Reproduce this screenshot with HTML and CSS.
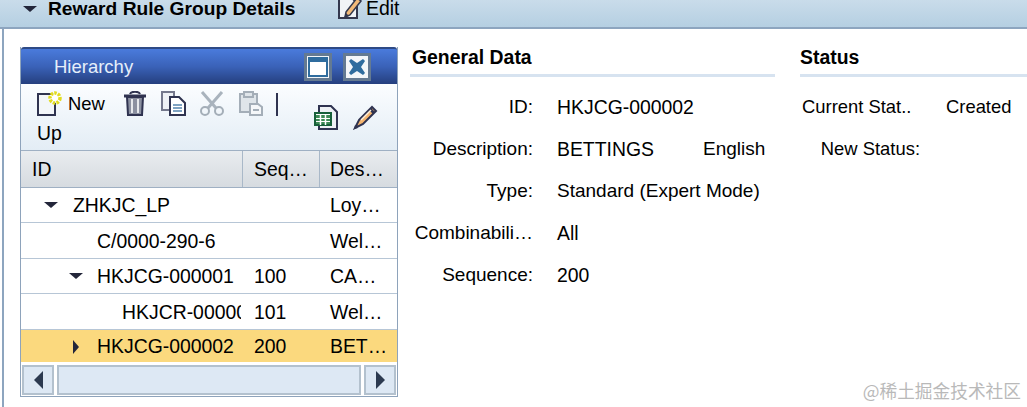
FILE: index.html
```html
<!DOCTYPE html>
<html lang="en">
<head>
  <meta charset="UTF-8">
  <title>Reward Rule Group Details</title>
  <link rel="stylesheet" href="styles.css">
</head>
<body>
  <div class="topbar">
    <span class="tri-down top-tri"></span>
    <span class="page-title">Reward Rule Group Details</span>
    <span class="edit-btn">
      <svg width="24" height="21" viewBox="0 0 24 21">
        <path d="M1 1h14l4 4v15H1z" fill="#f1f3f6" stroke="#34384e" stroke-width="2"/>
        <path d="M8 14L19 0l4 3-11 14-5 2z" fill="#f2b978" stroke="#33384d" stroke-width="1.500"/>
        <path d="M8 15l3 3-5 2z" fill="#34384e"/>
      </svg>
      Edit
    </span>
  </div>

  <div class="content">
    <div class="panel">
      <div class="panel-title">
        <span class="panel-name">Hierarchy</span>
        <span class="win-btn">
          <svg width="20" height="20" viewBox="0 0 20 20"><path d="M1 1h18v18H1z" fill="#fff" stroke="#2f6c9e" stroke-width="2"/><path d="M1 1h18v4H1z" fill="#2f6c9e"/></svg>
        </span>
        <span class="win-btn">
          <svg width="16" height="16" viewBox="0 0 16 16"><path d="M0 2l2-2 6 4 6-4 2 2-4 6 4 6-2 2-6-4-6 4-2-2 4-6z" fill="#2f6c9e"/></svg>
        </span>
      </div>

      <div class="toolbar">
        <div class="tool-row">
          <span class="new-tool">
            <svg width="25" height="25" viewBox="0 0 25 25">
              <path d="M1 3h17v21H1z" fill="#f3f6f9" stroke="#2f3350" stroke-width="2"/>
              <circle cx="18" cy="7" r="5" fill="#fff" stroke="#e2dc1e" stroke-width="3.500" stroke-dasharray="2.500 1.200"/>
            </svg>
            <span>New</span>
          </span>
          <svg class="tool" width="22" height="25" viewBox="0 0 22 25">
            <path d="M0 5h22" stroke="#2f3350" stroke-width="3"/>
            <path d="M6 3c1-3 9-3 10 0" fill="none" stroke="#2f3350" stroke-width="2"/>
            <path d="M3 6h16l-1 18H4z" fill="#8b90a0" stroke="#2f3350" stroke-width="2"/>
            <path d="M8 8v14M14 8v14" stroke="#e6e8ec" stroke-width="2"/>
          </svg>
          <svg class="tool copy-icon" width="25" height="25" viewBox="0 0 25 25">
            <path d="M1 1h12v18H1z" fill="#eef1f5" stroke="#74788c" stroke-width="2"/>
            <path d="M9 6h9l6 6v12H9z" fill="#fff" stroke="#2f3350" stroke-width="2"/>
            <path d="M12 14h9M12 17h9M12 20h9" stroke="#7fa3c2" stroke-width="2"/>
          </svg>
          <svg class="tool" width="24" height="25" viewBox="0 0 24 25">
            <path d="M2 1l14 16M22 1L8 17" stroke="#a9b3bd" stroke-width="3"/>
            <circle cx="5" cy="20" r="4" fill="none" stroke="#a4aeb8" stroke-width="2"/>
            <circle cx="19" cy="20" r="4" fill="none" stroke="#a4aeb8" stroke-width="2"/>
          </svg>
          <svg class="tool paste-icon" width="24" height="25" viewBox="0 0 24 25">
            <path d="M1 3h17v18H1z" fill="#dfe5ea" stroke="#a4aeb8" stroke-width="2"/>
            <path d="M5 1h9v5H5z" fill="#dfe5ea" stroke="#a4aeb8" stroke-width="2"/>
            <path d="M11 13h8l4 3v8H11z" fill="#f5f7f9" stroke="#a4aeb8" stroke-width="2"/>
            <path d="M14 19h6" stroke="#a4aeb8" stroke-width="2"/>
          </svg>
          <span class="tool-sep"></span>
        </div>
        <div class="tool-row second">
          <span class="up-label">Up</span>
          <svg class="sheet-icon" width="24" height="25" viewBox="0 0 24 25">
            <path d="M5 1h12l6 6v17H5z" fill="#eef1f5" stroke="#2f3350" stroke-width="2"/>
            <path d="M1 8h16v12H1z" fill="#fff" stroke="#17603a" stroke-width="2"/>
            <path d="M2 10h14v3H2zM2 14h14v2H2zM2 17h14v2H2z" fill="#3d8a55"/>
            <path d="M6.500 10v10M11.500 10v10" stroke="#fff" stroke-width="1.500"/>
          </svg>
          <svg class="pencil-icon" width="25" height="25" viewBox="0 0 25 25">
            <path d="M6 15L19 2l4 4L10 19l-8 4z" fill="#f5b56f" stroke="#2f3350" stroke-width="2"/>
            <path d="M17 4l4 4" stroke="#2f3350" stroke-width="3"/>
            <path d="M2 20l3 3-4 1z" fill="#2f3350"/>
            <path d="M8 15L18 5" stroke="#fdf0dd" stroke-width="1.500"/>
          </svg>
        </div>
      </div>

      <div class="grid-row head">
        <div class="cell c-id">ID</div>
        <div class="cell c-seq">Seq…</div>
        <div class="cell c-des">Des…</div>
      </div>
      <div class="grid-row">
        <div class="cell c-id lvl0"><span class="tri-down"></span>ZHKJC_LP</div>
        <div class="cell c-seq"></div>
        <div class="cell c-des">Loy…</div>
      </div>
      <div class="grid-row tall">
        <div class="cell c-id lvl1">C/0000-290-6</div>
        <div class="cell c-seq"></div>
        <div class="cell c-des">Wel…</div>
      </div>
      <div class="grid-row">
        <div class="cell c-id lvl1"><span class="tri-down"></span>HKJCG-000001</div>
        <div class="cell c-seq">100</div>
        <div class="cell c-des">CA…</div>
      </div>
      <div class="grid-row tall">
        <div class="cell c-id lvl2">HKJCR-000001</div>
        <div class="cell c-seq">101</div>
        <div class="cell c-des">Wel…</div>
      </div>
      <div class="grid-row selected">
        <div class="cell c-id lvl1"><span class="tri-right"></span>HKJCG-000002</div>
        <div class="cell c-seq">200</div>
        <div class="cell c-des">BET…</div>
      </div>

      <div class="scrollbar">
        <span class="sb-btn"><span class="arrow-left"></span></span>
        <span class="sb-track"></span>
        <span class="sb-btn"><span class="arrow-right"></span></span>
      </div>
    </div>

    <div class="group general">
      <h2>General Data</h2>
      <div class="form">
        <div class="form-row"><label>ID:</label><span>HKJCG-000002</span></div>
        <div class="form-row"><label>Description:</label><span class="desc">BETTINGS</span><span class="narrow">English</span></div>
        <div class="form-row"><label>Type:</label><span class="narrow">Standard (Expert Mode)</span></div>
        <div class="form-row"><label>Combinabili…</label><span>All</span></div>
        <div class="form-row"><label>Sequence:</label><span>200</span></div>
      </div>
    </div>

    <div class="group status">
      <h2>Status</h2>
      <div class="form">
        <div class="form-row"><label class="left">Current Stat..</label><span>Created</span></div>
        <div class="form-row"><label>New Status:</label></div>
      </div>
    </div>
  </div>

  <div class="watermark">@稀土掘金技术社区</div>
</body>
</html>
```

FILE: styles.css
```css
html, body {
  margin: 0;
  padding: 0;
  height: 100%;
  overflow: hidden;
}

body {
  position: relative;
  font-family: "Liberation Sans", Arial, sans-serif;
  font-size: 19.4px;
  color: #000;
  background: #fff;
}

/* top strip */
.topbar {
  display: flex;
  align-items: center;
  height: 17px;
  padding: 0 0 10px 23px;
  background: linear-gradient(#c9dcea, #b5cfe2);
  border-bottom: 2px solid #8da5bf;
}

.top-tri {
  margin-right: 11px;
}

.page-title {
  font-weight: bold;
  font-size: 19.2px;
  width: 290px;
  white-space: nowrap;
}

.edit-btn {
  display: flex;
  align-items: center;
  gap: 4px;
}

.tri-down {
  display: inline-block;
  width: 0;
  height: 0;
  border-left: 7px solid transparent;
  border-right: 7px solid transparent;
  border-top: 6px solid #23263a;
}

.tri-right {
  display: inline-block;
  width: 0;
  height: 0;
  border-top: 7px solid transparent;
  border-bottom: 7px solid transparent;
  border-left: 6px solid #23263a;
}

.content {
  display: flex;
  height: 378px;
  box-sizing: border-box;
  margin-left: 2px;
  padding: 18px 0 0 16px;
  border-left: 2px solid #8da5bf;
}

/* hierarchy panel */
.panel {
  width: 378px;
  height: 350px;
  flex: none;
  box-sizing: border-box;
  border: 1px solid #8ea3bb;
  border-top: 0;
  display: flex;
  flex-direction: column;
  overflow: hidden;
}

.panel-title {
  display: flex;
  align-items: center;
  gap: 11px;
  height: 37px;
  flex: none;
  box-sizing: border-box;
  padding: 0 26px 0 33px;
  background: linear-gradient(#4a7bdc, #3a62b8 50%, #253f7e);
  border-top: 2px solid #2e4a86;
  border-radius: 3px 3px 0 0;
  color: #e6effa;
  font-size: 18.5px;
}

.panel-name {
  flex: 1;
}

.win-btn {
  display: flex;
  align-items: center;
  justify-content: center;
  width: 28px;
  height: 28px;
  box-sizing: border-box;
  border: 3px solid #647a92;
  background: #f3f6f9;
}

.toolbar {
  height: 67px;
  flex: none;
  box-sizing: border-box;
  padding: 7px 0 0 16px;
  background: linear-gradient(#fbfdff, #e3edf5);
  border-bottom: 1px solid #9fb0c3;
}

.tool-row {
  display: flex;
  align-items: flex-start;
  height: 30px;
}

.new-tool {
  display: flex;
  align-items: center;
  gap: 6px;
  width: 87px;
  height: 25px;
  font-size: 18.4px;
}

.tool-row > svg.tool {
  margin-right: 15px;
}

.tool-row > svg.copy-icon {
  margin-right: 14px;
}

.tool-row > svg.paste-icon {
  margin-right: 13px;
}

.tool-sep {
  width: 2px;
  height: 23px;
  margin-top: 2px;
  background: #2f3350;
}

.second {
  height: 24px;
}

.up-label {
  width: 277px;
  line-height: 24px;
}

.sheet-icon {
  margin-top: -16px;
  margin-right: 15px;
}

.pencil-icon {
  margin-top: -16px;
}

/* tree table */
.grid-row {
  display: flex;
  height: 35px;
  flex: none;
  box-sizing: border-box;
  border-bottom: 1px solid #b7c6d6;
  background: #fff;
}

.grid-row.tall {
  height: 36px;
  padding-top: 1px;
}

.grid-row.head {
  height: 37px;
  background: linear-gradient(#e9ecef, #d6dbe0);
  border-bottom: 1px solid #9fb0c3;
}

.grid-row.selected {
  height: 32px;
  padding-top: 1px;
  background: #fbd97e;
  border-bottom: 0;
}

.cell {
  display: flex;
  align-items: center;
  box-sizing: border-box;
  white-space: nowrap;
  overflow: hidden;
}

.c-id {
  width: 222px;
  flex: none;
  padding-left: 11px;
}

.c-seq {
  width: 77px;
  flex: none;
  padding-left: 11px;
}

.c-des {
  flex: 1;
  padding-left: 10px;
}

.head .c-id,
.head .c-seq {
  border-right: 1px solid #a9b8c8;
}

.lvl0 {
  padding-left: 23px;
}

.lvl0 .tri-down {
  margin-right: 15px;
}

.lvl1 {
  padding-left: 76px;
}

.lvl1 .tri-down {
  margin-left: -28px;
  margin-right: 14px;
}

.lvl1 .tri-right {
  margin-left: -24px;
  margin-right: 18px;
}

.lvl2 {
  padding-left: 101px;
  border-right: 2px solid transparent;
}

/* scroll bar */
.scrollbar {
  display: flex;
  flex: 1;
  gap: 3px;
  padding: 3px 1px 1px;
  background: #fff;
}

.sb-btn,
.sb-track {
  display: flex;
  align-items: center;
  justify-content: center;
  box-sizing: border-box;
  border: 2px solid #b3c1ce;
  background: #dde8f4;
}

.sb-btn {
  width: 32px;
}

.sb-track {
  flex: 1;
}

.arrow-left,
.arrow-right {
  width: 0;
  height: 0;
  border-top: 9px solid transparent;
  border-bottom: 9px solid transparent;
}

.arrow-left {
  border-right: 9px solid #2c3a50;
}

.arrow-right {
  border-left: 9px solid #2c3a50;
}

/* forms on the right */
.group h2 {
  margin: 0;
  height: 27px;
  font-size: 19.4px;
  line-height: 20px;
  border-bottom: 3px solid #d7e3f0;
}

.general {
  width: 365px;
  margin-left: 12px;
  flex: none;
}

.general h2 {
  padding-left: 2px;
}

.status {
  flex: 1;
  margin-left: 25px;
}

.form {
  padding-top: 9px;
}

.form-row {
  display: flex;
  align-items: center;
  height: 42px;
}

.form-row label {
  font-size: 19px;
}

.narrow {
  font-size: 19px;
}

.general label {
  width: 123px;
  margin-right: 24px;
  text-align: right;
  white-space: nowrap;
}

.desc {
  width: 146px;
}

.status .form-row,
.status .form-row label {
  font-size: 18.4px;
}

.status label {
  width: 118px;
  margin-left: 2px;
  margin-right: 26px;
  text-align: right;
  white-space: nowrap;
}

.status label.left {
  text-align: left;
}

.watermark {
  position: absolute;
  right: 6px;
  bottom: 7px;
  font-family: "Noto Sans CJK SC", sans-serif;
  font-size: 17.7px;
  line-height: 20px;
  color: #b9b9b9;
}
```
